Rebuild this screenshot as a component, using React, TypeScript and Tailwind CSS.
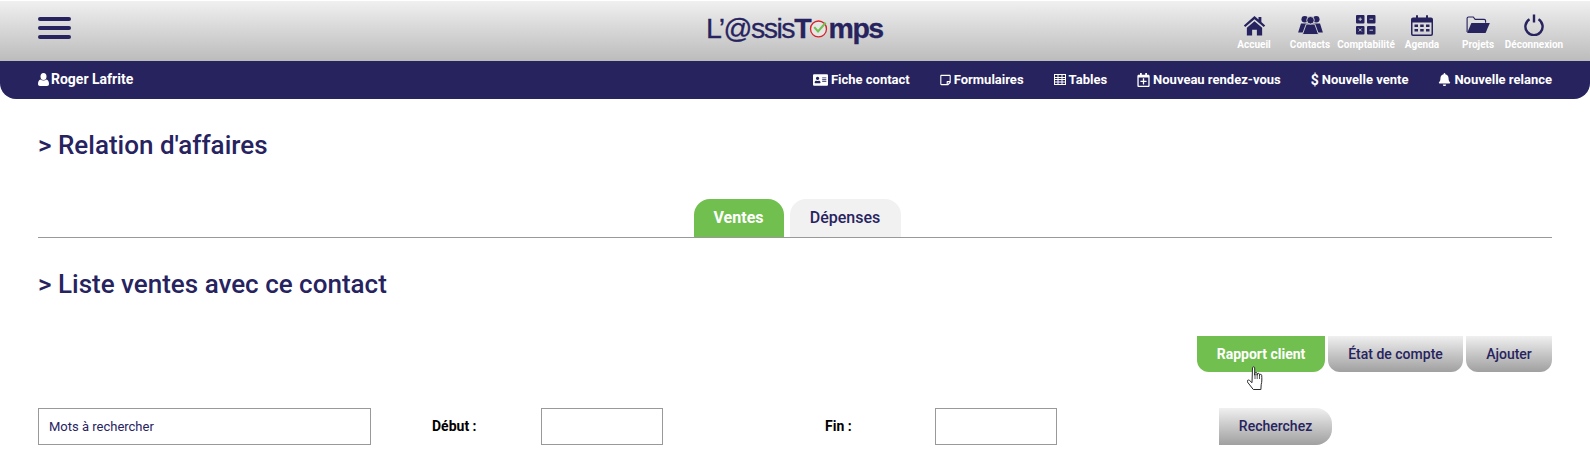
import { FaAddressCard, FaRegStickyNote, FaRegCalendarPlus, FaBell } from "react-icons/fa";

const navy = "#27235f";

function HomeIcon() {
  return (
    <svg viewBox="0 0 24 22" className="w-[23px] h-[21px]" fill={navy}>
      <path d="M12 1L0.800 11l1.500 1.700L12 4.400l9.700 8.300 1.500-1.700-4-3.600V2h-3v2.800z" />
      <path d="M12 6.500L4 13.400v8.100h5.500v-6h5v6H20v-8.100z" />
    </svg>
  );
}

function UsersIcon() {
  return (
    <svg viewBox="0 0 26 21" className="w-[25px] h-[20px]" fill={navy}>
      <circle cx="7" cy="4.500" r="3.500" />
      <circle cx="19" cy="4.500" r="3.500" />
      <path d="M0 18.500L3 9h8l3 9.500zM12 18.500L15 9h8l3 9.500z" />
      <path d="M4.500 20.500L8.500 9.500h9l4 11z" stroke="#d4d4d4" strokeWidth="1" />
      <circle cx="13" cy="5.500" r="4" stroke="#d4d4d4" strokeWidth="1" />
    </svg>
  );
}

function ComptaIcon() {
  return (
    <svg viewBox="0 0 20 20" className="w-[20px] h-[20px]" fill={navy}>
      <rect x="0" y="0" width="8.500" height="8.500" rx="1" />
      <rect x="11" y="0" width="8.500" height="8.500" rx="1" />
      <rect x="0" y="11" width="8.500" height="8.500" rx="1" />
      <rect x="11" y="11" width="8.500" height="8.500" rx="1" />
      <path d="M2.500 4.200h3.500M4.200 2.500v3.500M13.500 4.200h3.500M2.800 13.500l2.900 2.900M5.700 13.500l-2.900 2.900M13.500 15.200h3.500" stroke="#d8d8d8" strokeWidth="0.900" />
    </svg>
  );
}

function AgendaIcon() {
  return (
    <svg viewBox="0 0 22 21" className="w-[22px] h-[21px]" fill={navy}>
      <path d="M2 2.500h18a2 2 0 0 1 2 2V19a2 2 0 0 1-2 2H2a2 2 0 0 1-2-2V4.500a2 2 0 0 1 2-2zM1.500 7.500V19c0 .3.200.5.500.5h18c.300 0 .500-.2.500-.5V7.500z" fillRule="evenodd" />
      <rect x="5" y="0" width="2" height="5" rx="1" />
      <rect x="15" y="0" width="2" height="5" rx="1" />
      <path d="M3.500 9.500h3.500v2.500H3.500zM9.200 9.500h3.500v2.500H9.200zM15 9.500h3.500v2.500H15zM3.500 14h3.500v2.500H3.500zM9.200 14h3.500v2.500H9.200zM15 14h3.500v2.500H15z" />
    </svg>
  );
}

function FolderIcon() {
  return (
    <svg viewBox="0 0 25 19" className="w-[24px] h-[18px]" fill={navy}>
      <path d="M1 17V2.500C1 1.700 1.700 1 2.500 1h5l2 2.500H19c.800 0 1.500.700 1.500 1.500v2" fill="none" stroke={navy} strokeWidth="1.200" />
      <path d="M5.500 7.500H25L20.500 18H1z" />
    </svg>
  );
}

function PowerIcon() {
  return (
    <svg viewBox="0 0 22 22" className="w-[22px] h-[22px]" fill="none" stroke={navy} strokeWidth="2.400">
      <path d="M6.500 5.200a8.600 8.600 0 1 0 9 0" />
      <path d="M11 0.500v8" />
    </svg>
  );
}

function TableIcon() {
  return (
    <svg viewBox="0 0 12 11" className="w-[12px] h-[11px]" fill="none" stroke="#fff" strokeWidth="1">
      <rect x="0.500" y="0.500" width="11" height="10" />
      <path d="M0 3.500h12M0 5.500h12M0 8h12M4 0v11M8 0v11" />
    </svg>
  );
}

function UserIcon() {
  return (
    <svg viewBox="0 0 11 13" className="w-[11px] h-[13px]" fill="#fff">
      <ellipse cx="5.500" cy="3.500" rx="3" ry="3.500" />
      <path d="M2.500 6.500c1.500 1.300 4.500 1.300 6 0 1.500.500 2.500 2 2.500 4.500 0 1.200-.8 2-2 2H2c-1.200 0-2-.8-2-2 0-2.500 1-4 2.500-4.500z" />
    </svg>
  );
}

function LogoClock() {
  return (
    <svg viewBox="0 0 20 20" className="w-[19px] h-[19px] shrink-0 -ml-[1px] mr-[0.5px]" fill="none">
      <circle cx="10" cy="10.500" r="8.400" fill="#e6e6e6" stroke="#d8232a" strokeWidth="1.400" />
      <path d="M5.500 8.500l4 4.500 8-9" stroke="#71bf4f" strokeWidth="2.200" />
    </svg>
  );
}

function HandCursor() {
  return (
    <svg viewBox="0 0 18 25" className="absolute left-[50px] top-[30px] w-[18px] h-[25px]" fill="#fff" stroke="#2a2a2a" strokeWidth="1" strokeLinejoin="round">
      <path d="M5.500 1.800c0-1.300 2.200-1.300 2.200 0v7.400l0.200-2c0.200-1.100 2.100-1 2.200 0.200v1.800l0.200-1.200c0.200-1 2-0.900 2.100 0.200l0.100 1.400 0.200-0.700c0.300-0.900 1.900-0.700 2 0.400 0.200 3 0.300 6.600-0.500 9.400l-0.300 4.800h-7.600l-5.800-7.400c-0.900-1.400 0.700-2.800 2-1.700l2.500 2.300z" />
      <path d="M8 8v5M10.200 8.500v4.500M12.500 9v4" fill="none" strokeWidth="0.800" />
    </svg>
  );
}

const topLinks = [
  { label: "Accueil", icon: <HomeIcon /> },
  { label: "Contacts", icon: <UsersIcon /> },
  { label: "Comptabilité", icon: <ComptaIcon /> },
  { label: "Agenda", icon: <AgendaIcon /> },
  { label: "Projets", icon: <FolderIcon /> },
  { label: "Déconnexion", icon: <PowerIcon /> },
];

const barLinks = [
  { label: "Fiche contact", icon: <FaAddressCard className="w-[15px] h-[14px]" /> },
  { label: "Formulaires", icon: <FaRegStickyNote className="w-[11px] h-[12px]" /> },
  { label: "Tables", icon: <TableIcon /> },
  { label: "Nouveau rendez-vous", icon: <FaRegCalendarPlus className="w-[13px] h-[14px]" /> },
  { label: "Nouvelle vente", icon: <span className="text-[14px] leading-none">$</span> },
  { label: "Nouvelle relance", icon: <FaBell className="w-[13px] h-[13px]" /> },
];

const grayButton = "bg-gradient-to-b from-[#f0f0f0] to-[#a0a0a0] text-[#27235f] font-medium";

export default function App() {
  return (
    <div className="w-[1590px] h-[450px] overflow-hidden bg-white text-[#27235f]" style={{ fontFamily: "Roboto, sans-serif" }}>
      {/* Top bar */}
      <header className="h-[60px] mt-px flex items-start justify-between pl-[38px] pr-[28px] pt-[13px] bg-gradient-to-b from-[#f0f0f0] to-[#bcbcbc] relative">
        <div className="mt-[3px] flex flex-col gap-[5px] w-[33px]">
          <span className="h-[4px] rounded-full bg-[#27235f]" />
          <span className="h-[4px] rounded-full bg-[#27235f]" />
          <span className="h-[4px] rounded-full bg-[#27235f]" />
        </div>
        <div className="absolute left-[706px] top-[10px] flex items-center text-[28.5px] leading-[34px] tracking-[-1.5px] [-webkit-text-stroke:0.3px_#27235f]" style={{ fontFamily: "'Liberation Sans', sans-serif" }}>
          <span className="font-normal">L’@ssis</span>
          <span className="font-bold">T</span>
          <LogoClock />
          <span className="font-bold">mps</span>
        </div>
        <nav className="flex">
          {topLinks.map((link) => (
            <div key={link.label} className="w-[56px] flex flex-col items-center">
              <div className="h-[22px] flex items-center justify-center">{link.icon}</div>
              <span className="mt-[3px] text-[10px] leading-[12px] font-bold text-white whitespace-nowrap">{link.label}</span>
            </div>
          ))}
        </nav>
      </header>

      {/* Navy bar */}
      <div className="h-[39px] -mt-px flex items-center justify-between px-[38px] bg-[#27235f] rounded-b-[16px] text-white font-bold text-[13px]">
        <div className="flex items-center gap-[2px] text-[14px]">
          <UserIcon />
          <span>Roger Lafrite</span>
        </div>
        <div className="flex items-center gap-[30px]">
          {barLinks.map((link) => (
            <div key={link.label} className="flex items-center gap-[3px]">
              {link.icon}
              <span>{link.label}</span>
            </div>
          ))}
        </div>
      </div>

      <main className="px-[38px]">
        <h1 className="mt-[30px] text-[26px] leading-[32px] font-medium">&gt; Relation d'affaires</h1>

        {/* Tabs */}
        <div className="mt-[38px] flex justify-center gap-[6px] border-b border-[#999999] h-[39px] pl-[4px]">
          <div className="w-[90px] h-[38px] flex items-center justify-center rounded-t-[16px] bg-[#71bf4f] text-white text-[16px] font-bold">Ventes</div>
          <div className="w-[111px] h-[38px] flex items-center justify-center rounded-t-[16px] bg-[#f1f1f1] text-[16px] font-medium">Dépenses</div>
        </div>

        <h2 className="mt-[30px] text-[26px] leading-[32px] font-medium">&gt; Liste ventes avec ce contact</h2>

        {/* Actions */}
        <div className="mt-[36px] flex justify-end gap-[3px] text-[14px]">
          <div className="relative w-[128px] h-[36px] flex items-center justify-center rounded-b-[12px] bg-[#71bf4f] text-white font-bold">
            Rapport client
            <HandCursor />
          </div>
          <div className={`w-[135px] h-[36px] flex items-center justify-center rounded-b-[12px] ${grayButton}`}>État de compte</div>
          <div className={`w-[86px] h-[36px] flex items-center justify-center rounded-b-[12px] ${grayButton}`}>Ajouter</div>
        </div>

        {/* Search */}
        <div className="mt-[36px] flex items-center text-[14px]">
          <div className="w-[333px] h-[37px] border border-[#999999] flex items-center pl-[10px] text-[13px]">Mots à rechercher</div>
          <span className="ml-[61px] w-[109px] font-bold text-black">Début :</span>
          <div className="w-[122px] h-[37px] border border-[#999999]" />
          <span className="ml-[162px] w-[110px] font-bold text-black">Fin :</span>
          <div className="w-[122px] h-[37px] border border-[#999999]" />
          <div className={`ml-[162px] w-[113px] h-[37px] flex items-center justify-center rounded-r-[16px] ${grayButton}`}>Recherchez</div>
        </div>
      </main>
    </div>
  );
}
